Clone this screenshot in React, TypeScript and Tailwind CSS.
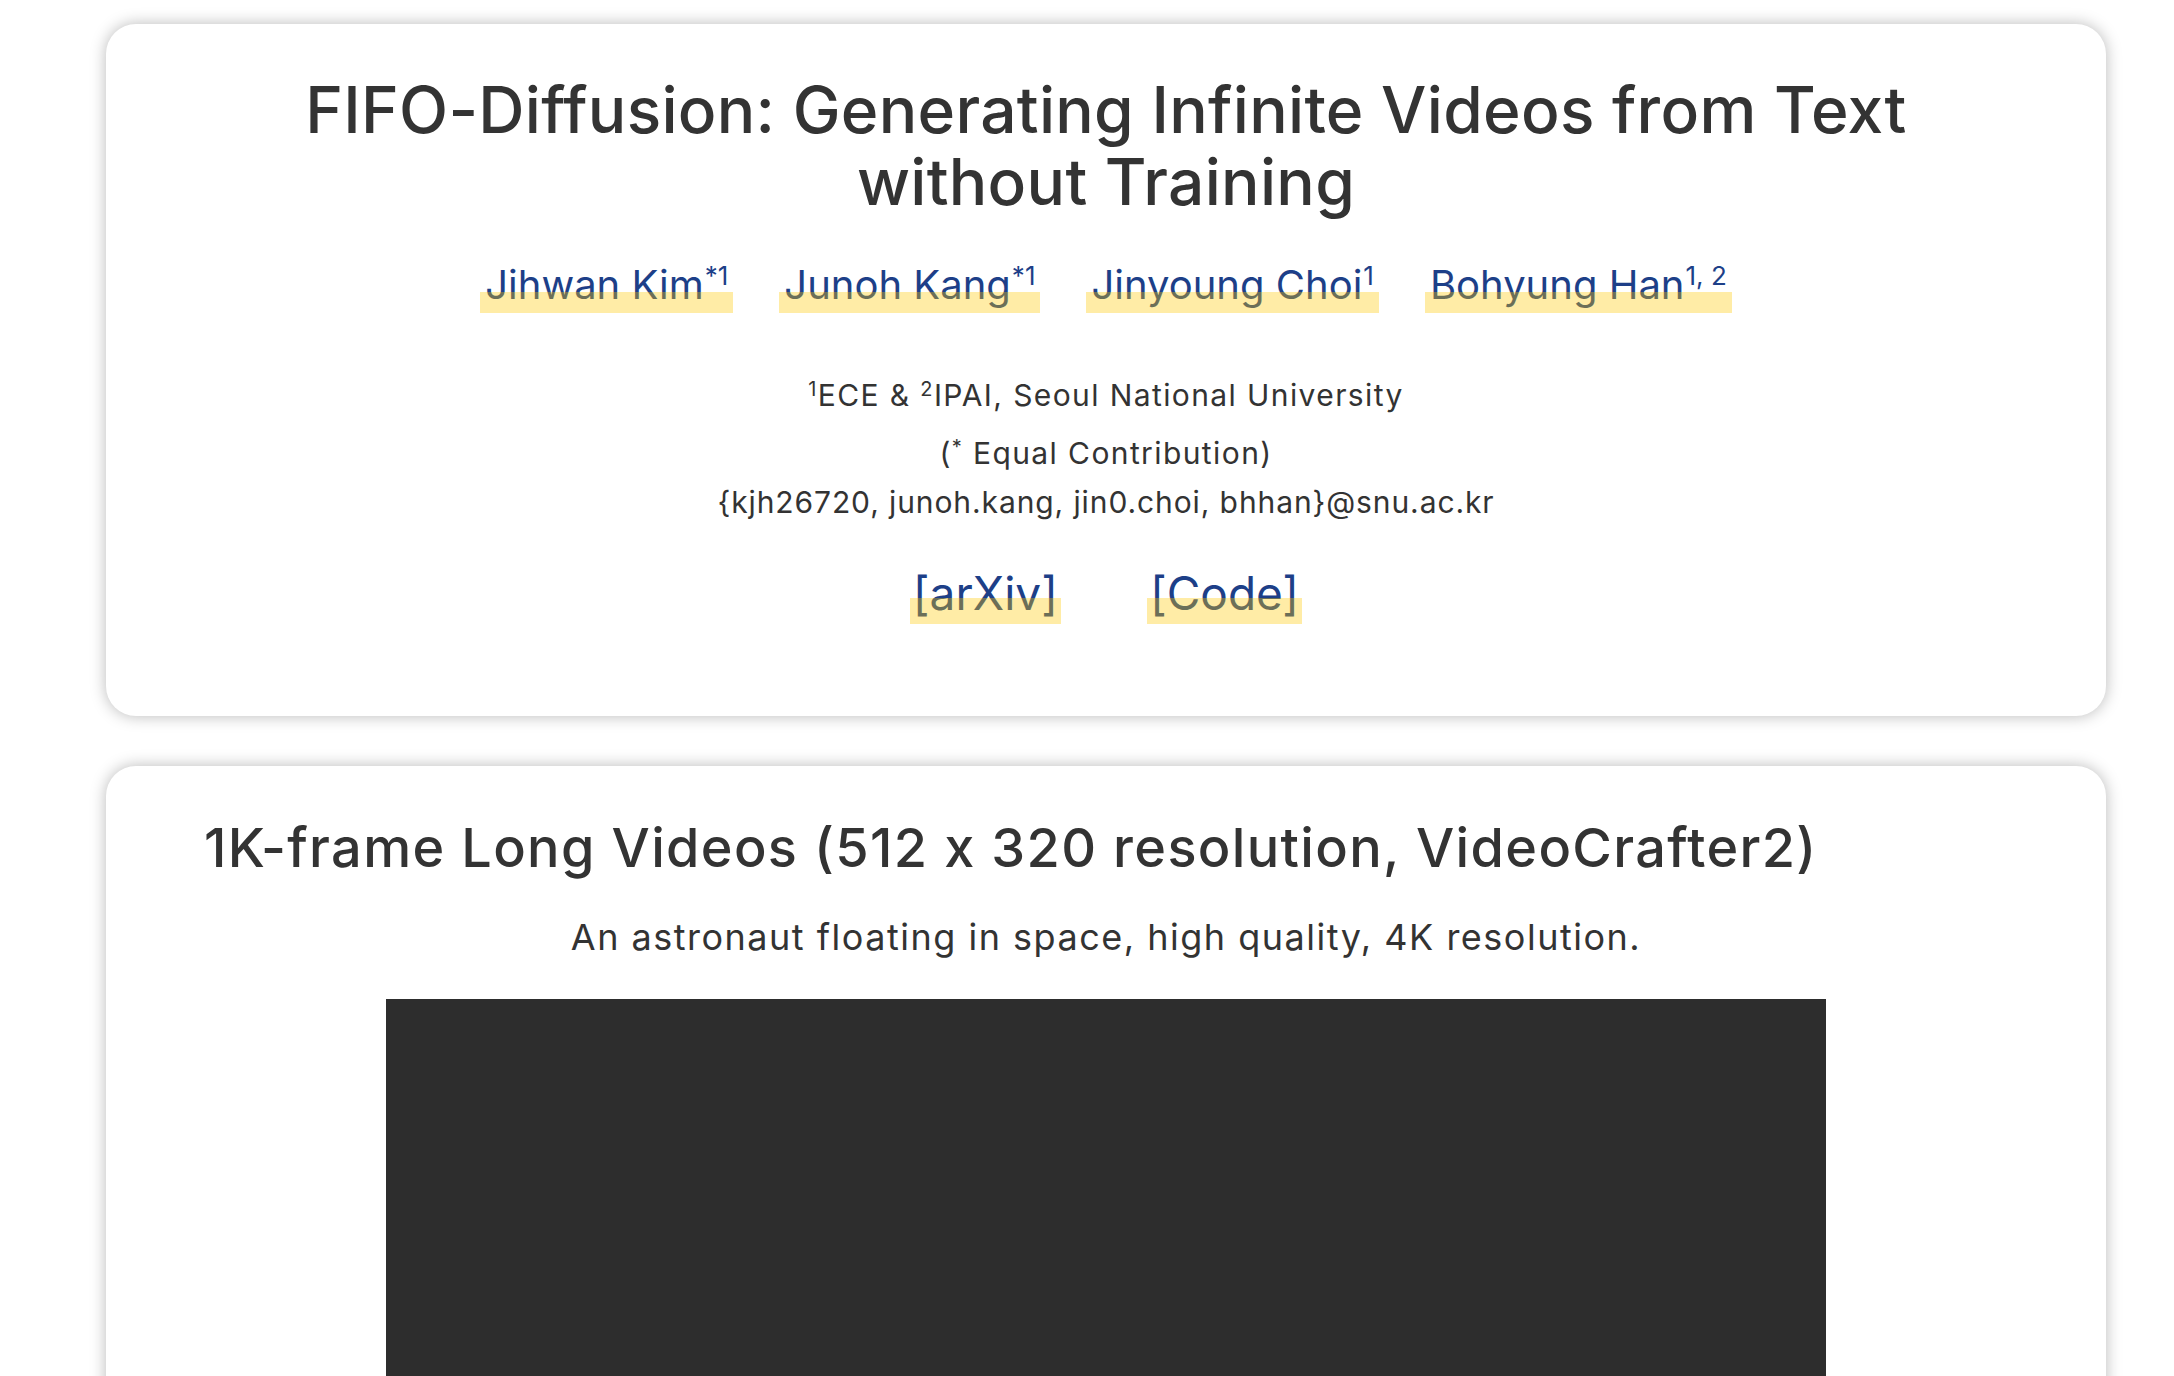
const AUTHORS = [
  { name: 'Jihwan Kim', sup: '*1' },
  { name: 'Junoh Kang', sup: '*1' },
  { name: 'Jinyoung Choi', sup: '1' },
  { name: 'Bohyung Han', sup: '1, 2' },
]

const LINKS = ['[arXiv]', '[Code]']

const Card = ({ children, className = '' }: { children: React.ReactNode; className?: string }) => (
  <div
    className={`ml-[106px] w-[2000px] bg-white rounded-[30px] shadow-[0_0_16px_rgba(0,0,0,0.28)] ${className}`}
  >
    {children}
  </div>
)

export default function App() {
  return (
    <div className="min-h-screen bg-white pt-[24px] pb-10 text-[#333] font-['Inter','Noto_Sans',sans-serif] [font-feature-settings:'calt'_0]">
      <Card className="pt-[50px] pb-[95px] flex flex-col items-center text-center">
        <h1 className="text-[64px] leading-[72px] font-medium tracking-[0.3px] w-[1660px]">
          FIFO-Diffusion: Generating Infinite Videos from Text without Training
        </h1>

        <div className="mt-[41px] flex items-start gap-[46px] text-[40px] leading-[52px] text-[#1d3f88]">
          {AUTHORS.map((a) => (
            <a
              key={a.name}
              className="relative inline-block px-[5px] after:absolute after:left-0 after:right-0 after:top-[33px] after:h-[21px] after:bg-[rgba(255,200,0,0.35)]"
            >
              {a.name}
              <sup className="text-[26px] ml-[1px] top-[-14px]">{a.sup}</sup>
            </a>
          ))}
        </div>

        <div className="mt-[64px] text-[30px] leading-[40px] tracking-[1.4px]">
          <sup className="text-[20px] top-[-10px]">1</sup>ECE &amp; <sup className="text-[20px] top-[-10px]">2</sup>IPAI, Seoul
          National University
        </div>
        <div className="mt-[18px] text-[30px] leading-[40px] tracking-[1.4px]">
          (<sup className="text-[20px] top-[-10px]">*</sup> Equal Contribution)
        </div>
        <div className="mt-[9px] text-[30px] leading-[40px] tracking-[0.9px]">
          {'{'}kjh26720, junoh.kang, jin0.choi, bhhan{'}'}@snu.ac.kr
        </div>

        <div className="mt-[43px] flex gap-[86px] text-[46px] leading-[56px] text-[#1d3f88]">
          {LINKS.map((l) => (
            <a
              key={l}
              className="relative inline-block px-[3px] after:absolute after:left-0 after:right-0 after:top-[33px] after:h-[26px] after:bg-[rgba(255,200,0,0.35)]"
            >
              {l}
            </a>
          ))}
        </div>
      </Card>

      <Card className="mt-[50px] pt-[50px] pb-[80px]">
        <h2 className="px-[98px] text-[54px] leading-[64px] font-medium tracking-[1.35px]">
          1K-frame Long Videos (512 x 320 resolution, VideoCrafter2)
        </h2>
        <p className="mt-[35px] text-center text-[36px] leading-[44px] tracking-[1.5px]">
          An astronaut floating in space, high quality, 4K resolution.
        </p>
        <div className="mt-[40px] mx-auto w-[1440px] h-[900px] bg-[#2d2d2d]" />
      </Card>
    </div>
  )
}
